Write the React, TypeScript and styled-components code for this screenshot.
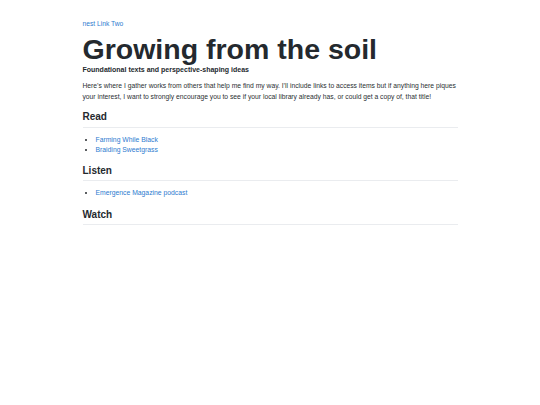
import React from "react";
import styled, { createGlobalStyle } from "styled-components";

const Global = createGlobalStyle`
  html, body { margin: 0; padding: 0; background: #fff; }
  body {
    font-family: "Liberation Sans", Arial, Helvetica, sans-serif;
    color: #24292e;
    font-size: 6.7px;
    line-height: 1.5;
  }
`;

const Page = styled.main`
  width: 375px;
  margin: 0 auto;
  padding: 18.7px 0 0 0;
  box-sizing: border-box;
`;

const NavLink = styled.a`
  color: #2e7bcf;
  text-decoration: none;
  font-size: 6.7px;
  line-height: 10px;
  display: block;
`;

const Title = styled.h1`
  font-size: 28.5px;
  font-weight: 700;
  line-height: 30px;
  margin: 5px 0 0 0;
  color: #24292e;
`;

const Subtitle = styled.p`
  font-weight: 700;
  font-size: 7px;
  line-height: 10px;
  margin: 1.4px 0 0 0;
`;

const Para = styled.p`
  margin: 4.6px 0 3.5px 0;
  font-size: 6.74px;
  line-height: 11px;
  color: #2b2f33;
`;

const H2 = styled.h2`
  font-size: 10px;
  font-weight: 700;
  line-height: 13px;
  margin: 9.5px 0 7px 0;
  padding-bottom: 3px;
  border-bottom: 1px solid #eaecef;
  color: #24292e;
  &:first-of-type { margin-top: 8.5px; padding-bottom: 3.5px; }
`;

const List = styled.ul`
  margin: 0;
  padding-left: 13px;
  list-style: disc;
  font-size: 6.8px;
  line-height: 10px;
`;

const Item = styled.li`
  &::marker { color: #24292e; }
`;

const ItemLink = styled.a`
  color: #2e7bcf;
  text-decoration: none;
`;

export default function App() {
  return (
    <>
      <Global />
      <Page>
        <NavLink href="#">nest Link Two</NavLink>
        <Title>Growing from the soil</Title>
        <Subtitle>Foundational texts and perspective-shaping ideas</Subtitle>
        <Para>
          Here’s where I gather works from others that help me find my way. I’ll include links to access items but if anything here piques your interest, I want to strongly encourage you to see if your local library already has, or could get a copy of, that title!
        </Para>
        <H2>Read</H2>
        <List>
          <Item><ItemLink href="#">Farming While Black</ItemLink></Item>
          <Item><ItemLink href="#">Braiding Sweetgrass</ItemLink></Item>
        </List>
        <H2>Listen</H2>
        <List>
          <Item><ItemLink href="#">Emergence Magazine podcast</ItemLink></Item>
        </List>
        <H2>Watch</H2>
      </Page>
    </>
  );
}
